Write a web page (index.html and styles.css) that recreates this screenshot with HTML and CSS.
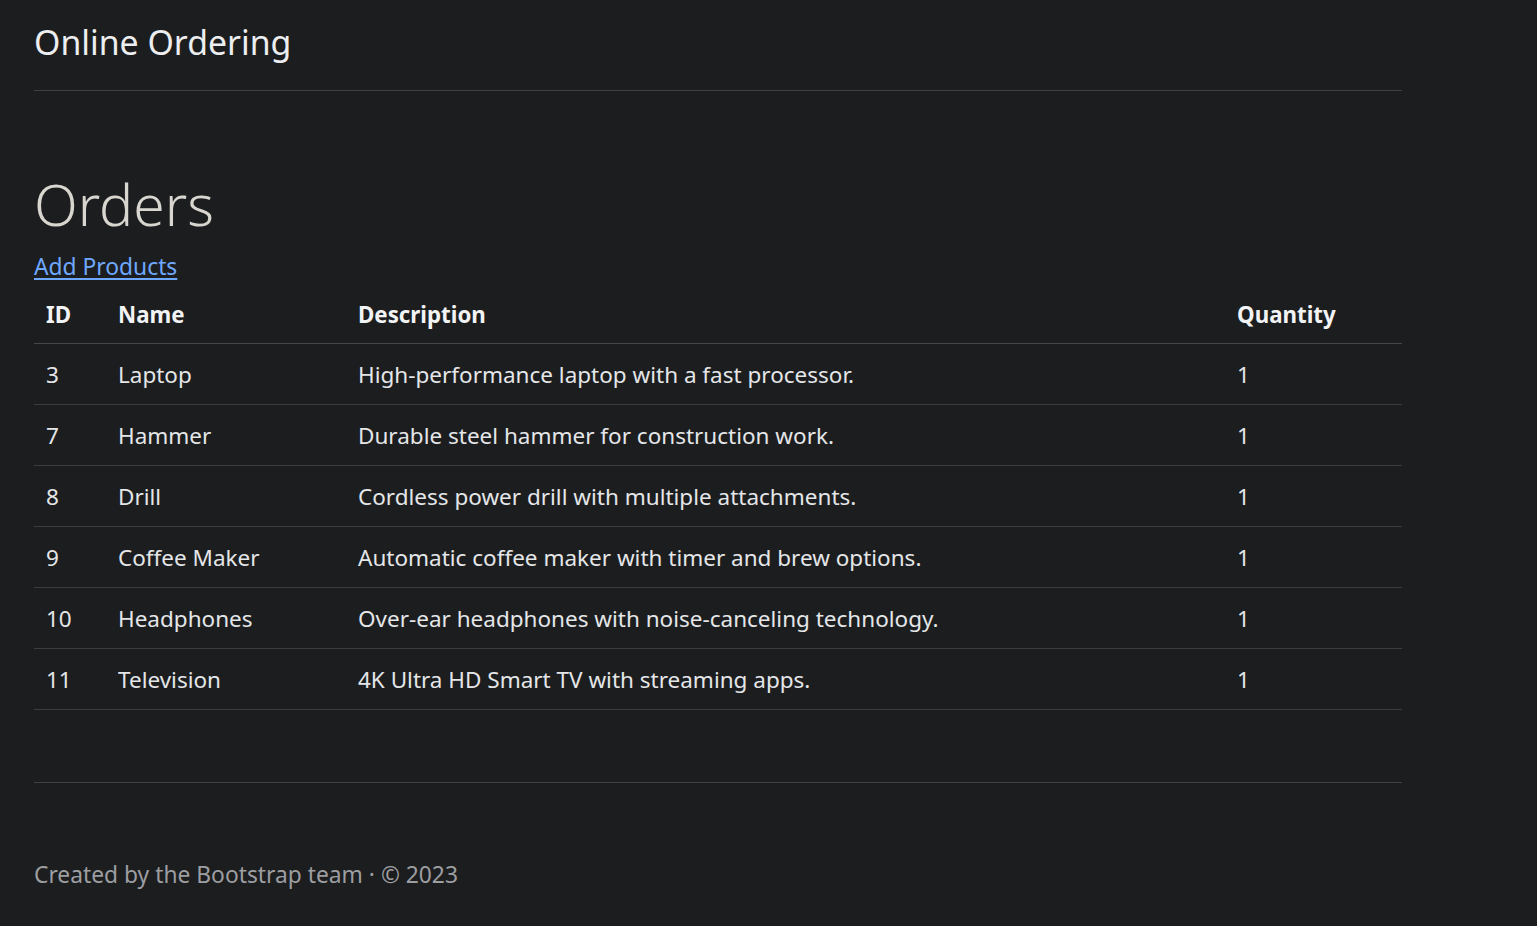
FILE: index.html
```html
<!DOCTYPE html>
<html lang="en">
<head>
<meta charset="utf-8">
<title>Online Ordering</title>
<link rel="stylesheet" href="styles.css">
</head>
<body>
<div class="page">
  <header class="site-header">
    <span class="brand">Online Ordering</span>
  </header>
  <main class="main">
    <h1 class="title">Orders</h1>
    <a class="add-link" href="#">Add Products</a>
    <table class="orders">
      <thead>
        <tr><th class="c-id">ID</th><th class="c-name">Name</th><th class="c-desc">Description</th><th class="c-qty">Quantity</th></tr>
      </thead>
      <tbody>
        <tr><td>3</td><td>Laptop</td><td>High-performance laptop with a fast processor.</td><td>1</td></tr>
        <tr><td>7</td><td>Hammer</td><td>Durable steel hammer for construction work.</td><td>1</td></tr>
        <tr><td>8</td><td>Drill</td><td>Cordless power drill with multiple attachments.</td><td>1</td></tr>
        <tr><td>9</td><td>Coffee Maker</td><td>Automatic coffee maker with timer and brew options.</td><td>1</td></tr>
        <tr><td>10</td><td>Headphones</td><td>Over-ear headphones with noise-canceling technology.</td><td>1</td></tr>
        <tr><td>11</td><td>Television</td><td>4K Ultra HD Smart TV with streaming apps.</td><td>1</td></tr>
      </tbody>
    </table>
  </main>
  <footer class="site-footer">
    <p class="footer-text">Created by the Bootstrap team · © 2023</p>
  </footer>
</div>
</body>
</html>
```

FILE: styles.css
```css
html, body {
  margin: 0;
  padding: 0;
}
body {
  background: #1c1d1f;
  color: #dee2e6;
  font-family: "Noto Sans", "Open Sans", sans-serif;
  font-size: 22.5px;
}
.page {
  width: 1368px;
  margin-left: 34px;
}
.site-header {
  height: 91px;
  border-bottom: 1px solid #3f4145;
  box-sizing: border-box;
  padding-top: 17px;
}
.brand {
  font-size: 33.8px;
  color: #eceef0;
  line-height: 50px;
}
.main {
  padding-top: 77px;
}
.title {
  margin: 0;
  font-size: 57px;
  font-weight: 300;
  line-height: 72px;
  color: #d9d6d0;
}
.add-link {
  display: inline-block;
  margin-top: 12px;
  color: #6ea8fe;
  text-decoration: underline;
  text-underline-offset: 3px;
  line-height: 30px;
  font-size: 22.8px;
}
.orders {
  width: 100%;
  border-collapse: collapse;
  margin-top: 4px;
}
.orders th {
  text-align: left;
  font-weight: 700;
  font-size: 22.3px;
  color: #f2f3f4;
  height: 57px;
  padding: 0 12px;
  border-bottom: 1px solid #45474b;
  vertical-align: middle;
}
.orders td {
  height: 60px;
  padding: 0 12px;
  border-bottom: 1px solid #3b3d41;
  vertical-align: middle;
  color: #e4e6e8;
}
.c-id { width: 48px; }
.c-name { width: 216px; }
.c-desc { width: 855px; }
.site-footer {
  margin-top: 72px;
  border-top: 1px solid #3f4145;
  padding-top: 76px;
}
.footer-text {
  margin: 0;
  color: #9c9ea1;
  font-size: 22.8px;
  line-height: 32px;
}
```
